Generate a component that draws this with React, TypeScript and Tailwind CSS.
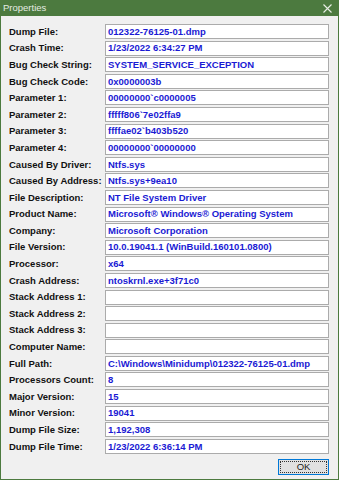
import React from "react";

const rows: [string, string][] = [
  ["Dump File:", "012322-76125-01.dmp"],
  ["Crash Time:", "1/23/2022 6:34:27 PM"],
  ["Bug Check String:", "SYSTEM_SERVICE_EXCEPTION"],
  ["Bug Check Code:", "0x0000003b"],
  ["Parameter 1:", "00000000`c0000005"],
  ["Parameter 2:", "fffff806`7e02ffa9"],
  ["Parameter 3:", "ffffae02`b403b520"],
  ["Parameter 4:", "00000000`00000000"],
  ["Caused By Driver:", "Ntfs.sys"],
  ["Caused By Address:", "Ntfs.sys+9ea10"],
  ["File Description:", "NT File System Driver"],
  ["Product Name:", "Microsoft® Windows® Operating System"],
  ["Company:", "Microsoft Corporation"],
  ["File Version:", "10.0.19041.1 (WinBuild.160101.0800)"],
  ["Processor:", "x64"],
  ["Crash Address:", "ntoskrnl.exe+3f71c0"],
  ["Stack Address 1:", ""],
  ["Stack Address 2:", ""],
  ["Stack Address 3:", ""],
  ["Computer Name:", ""],
  ["Full Path:", "C:\\Windows\\Minidump\\012322-76125-01.dmp"],
  ["Processors Count:", "8"],
  ["Major Version:", "15"],
  ["Minor Version:", "19041"],
  ["Dump File Size:", "1,192,308"],
  ["Dump File Time:", "1/23/2022 6:36:14 PM"],
];

export default function App() {
  return (
    <div
      className="w-[339px] h-[480px] flex flex-col bg-[#4c7a3f]"
      style={{ fontFamily: '"Liberation Sans", Arial, sans-serif' }}
    >
      <div className="h-[16px] flex items-center justify-between pl-[3px] pr-[6px] shrink-0">
        <span className="text-[9.5px] text-[#e4ebe1] leading-none">Properties</span>
        <svg width="9" height="9" viewBox="0 0 9 9" className="mr-[1px]">
          <path d="M0.5 0.5 L8.5 8.5 M8.5 0.5 L0.5 8.5" stroke="#e8eee5" strokeWidth="1.1" />
        </svg>
      </div>
      <div className="flex-1 mx-[1px] mb-[1px] bg-[#f0f0f0] flex flex-col pt-[8px] pl-[8px] pr-[9px]">
        <div className="flex flex-col gap-y-[1.6px]">
          {rows.map(([label, value]) => (
            <div key={label} className="flex items-center h-[15px]">
              <div className="w-[96px] shrink-0 text-[9.5px] font-bold text-[#111] leading-none whitespace-nowrap">
                {label}
              </div>
              <div className="flex-1 h-[15px] bg-white border border-[#ababab] flex items-center pl-[2px]">
                <span className="text-[9.5px] font-bold text-[#1a1ad4] leading-none whitespace-nowrap">
                  {value}
                </span>
              </div>
            </div>
          ))}
        </div>
        <div className="flex justify-end mt-[5px]">
          <div className="w-[51px] h-[16px] bg-[#e1e1e1] border border-[#0078d7] flex items-center justify-center p-[1px]">
            <div className="w-full h-full border border-dotted border-[#333] flex items-center justify-center">
              <span className="text-[9.5px] text-[#222] leading-none">OK</span>
            </div>
          </div>
        </div>
      </div>
    </div>
  );
}
